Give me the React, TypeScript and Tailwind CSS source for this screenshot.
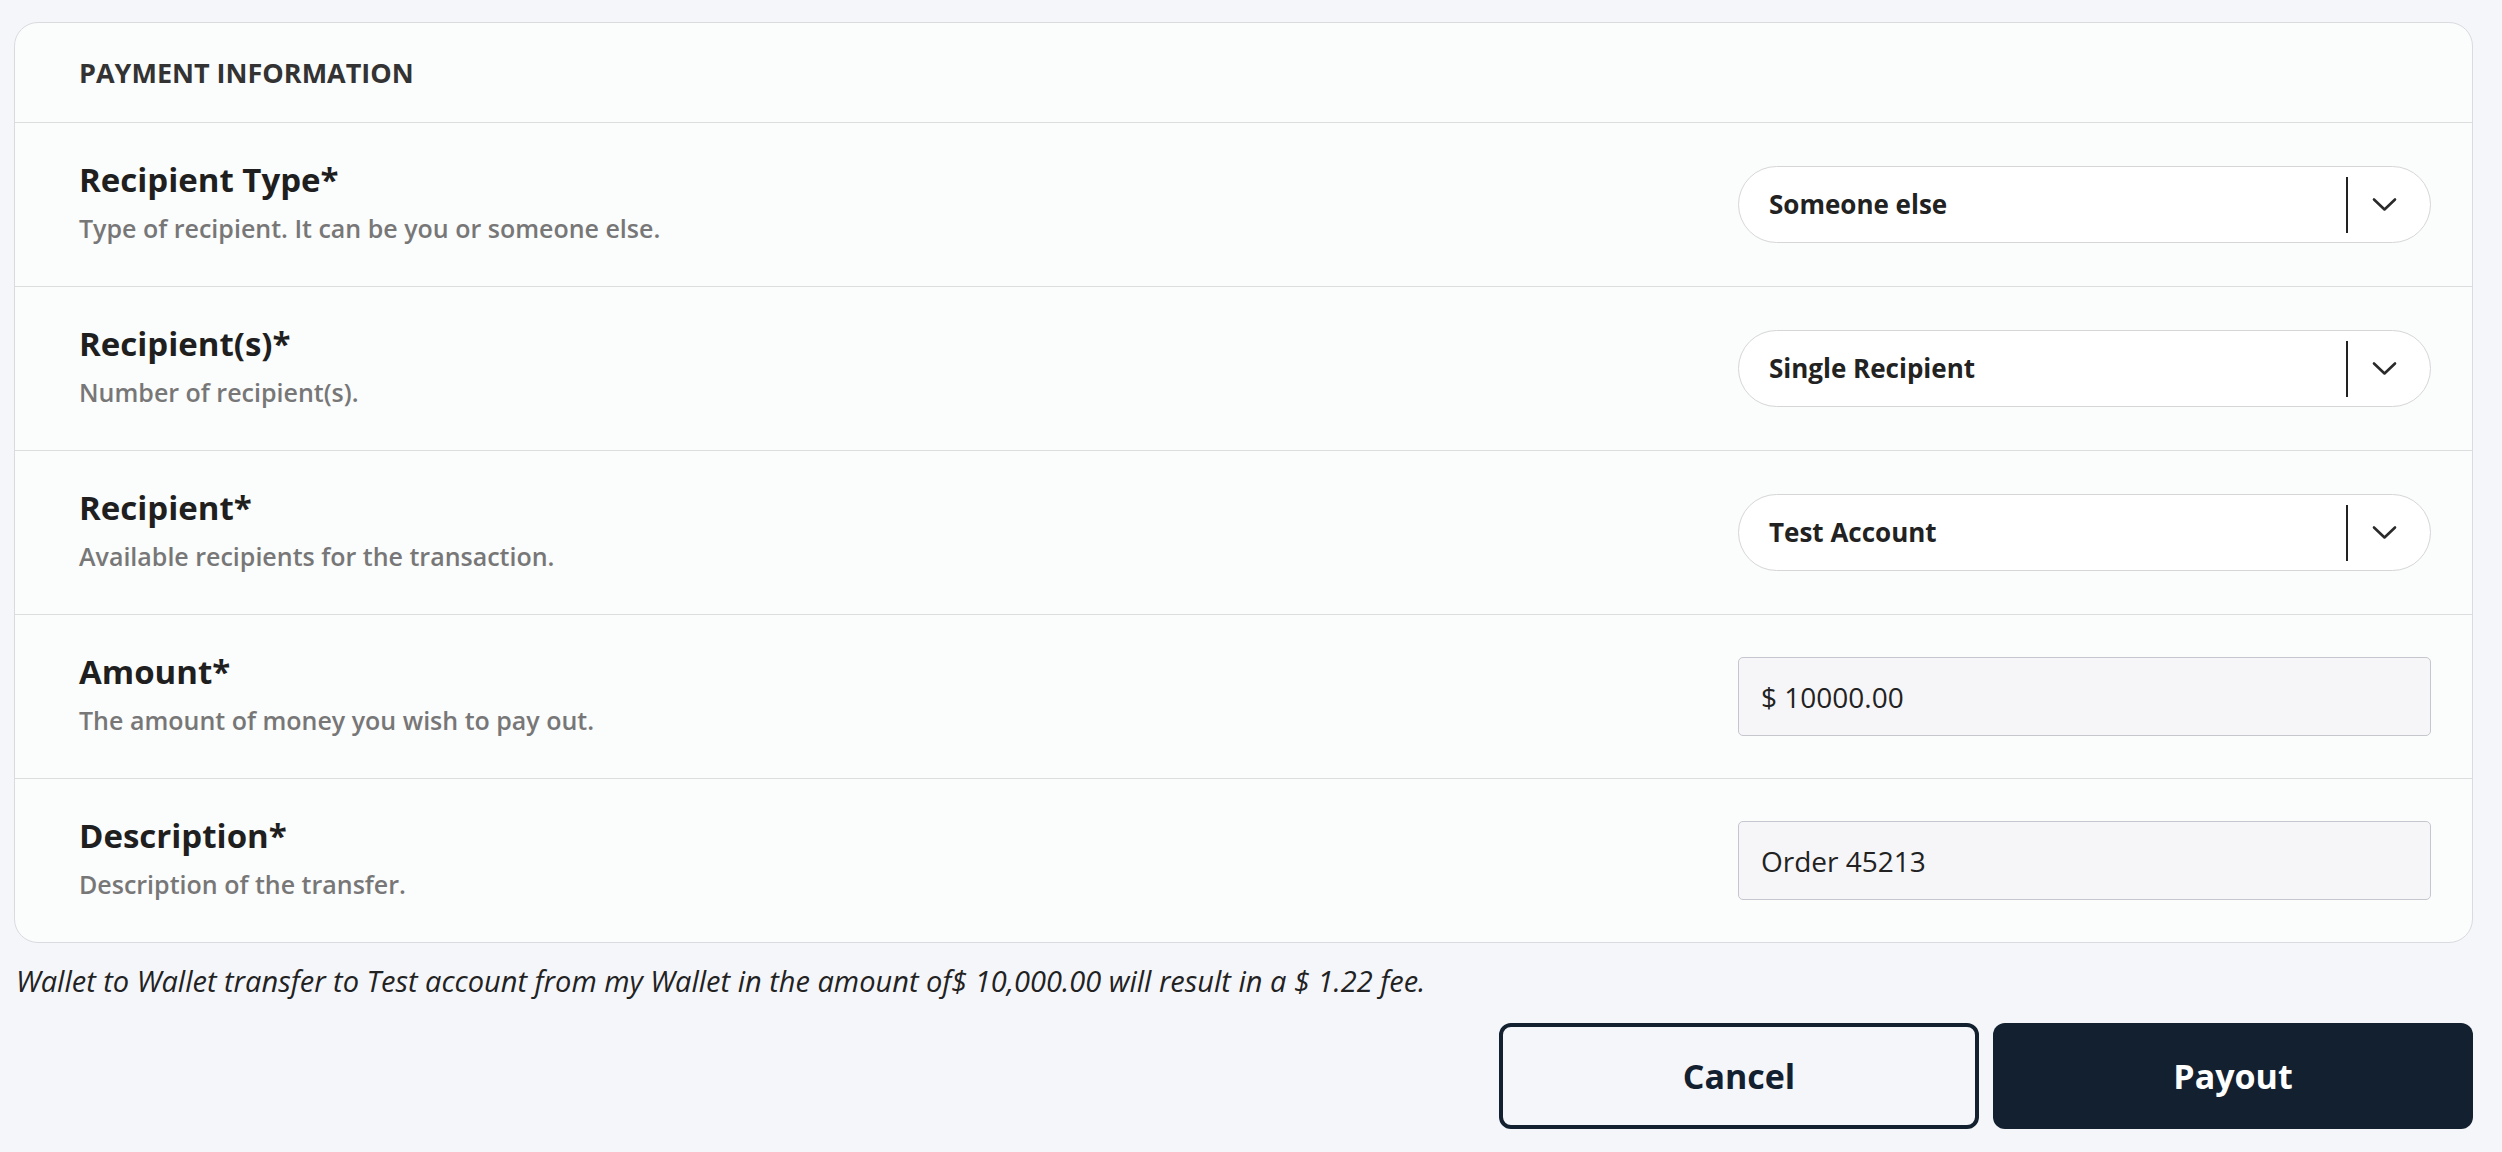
import React from "react";

type Field = {
    title: string;
    hint: string;
    kind: "select" | "input";
    value: string;
};

const fields: Field[] = [
    { title: "Recipient Type*", hint: "Type of recipient. It can be you or someone else.", kind: "select", value: "Someone else" },
    { title: "Recipient(s)*", hint: "Number of recipient(s).", kind: "select", value: "Single Recipient" },
    { title: "Recipient*", hint: "Available recipients for the transaction.", kind: "select", value: "Test Account" },
    { title: "Amount*", hint: "The amount of money you wish to pay out.", kind: "input", value: "$ 10000.00" },
    { title: "Description*", hint: "Description of the transfer.", kind: "input", value: "Order 45213" },
];

const Chevron = () => (
    <svg width="25" height="15" viewBox="0 0 25 15" fill="none" className="shrink-0">
        <path d="M2 2.5 L12.5 12.5 L23 2.5" stroke="#2a2a2a" strokeWidth="2.6" strokeLinecap="round" strokeLinejoin="round" />
    </svg>
);

const SelectBox = ({ value }: { value: string }) => (
    <div className="w-[693px] h-[77px] rounded-full border border-[#d6d6d8] bg-white flex items-center">
        <span className="flex-1 pl-[30px] text-[26px] font-bold text-[#222]">{value}</span>
        <div className="w-[2px] h-[56px] bg-[#222]" />
        <div className="ml-[24px] mr-[33px] flex items-center">
            <Chevron />
        </div>
    </div>
);

const InputBox = ({ value }: { value: string }) => (
    <div className="w-[693px] h-[79px] rounded-[5px] border border-[#c6c7ce] bg-[#f6f6f8] flex items-center pl-[22px] text-[28px] text-[#222]">
        {value}
    </div>
);

export default function App() {
    return (
        <div className="min-h-screen bg-[#f5f6fa] pt-[22px] font-['Open_Sans',_'Noto_Sans',_sans-serif]">
            {/* Payment card */}
            <div className="ml-[14px] w-[2459px] rounded-[24px] border border-[#d9dbdf] bg-[#fbfcfc] overflow-hidden">
                <div className="h-[99px] flex items-center px-[64px]">
                    <h2 className="text-[27px] leading-[32px] font-bold uppercase text-[#333]">Payment Information</h2>
                </div>
                {fields.map((f) => (
                    <div key={f.title} className="h-[164px] border-t border-[#dcdddf] flex items-center justify-between pl-[64px] pr-[41px]">
                        <div className="flex flex-col gap-[12px] -mt-[5px]">
                            <span className="text-[33px] leading-[40px] font-bold text-[#1f1f1f]">{f.title}</span>
                            <span className="text-[25px] leading-[32px] font-semibold text-[#777]">{f.hint}</span>
                        </div>
                        {f.kind === "select" ? <SelectBox value={f.value} /> : <InputBox value={f.value} />}
                    </div>
                ))}
            </div>

            <p className="mt-[20px] pl-[16px] text-[29px] leading-[36px] italic text-[#222]">
                Wallet to Wallet transfer to Test account from my Wallet in the amount of$ 10,000.00 will result in a $ 1.22 fee.
            </p>

            <div className="mt-[24px] pr-[29px] flex justify-end gap-[14px]">
                <button className="w-[480px] h-[106px] rounded-[12px] border-[4px] border-[#13202f] bg-transparent text-[34px] font-bold text-[#13202f]">
                    Cancel
                </button>
                <button className="w-[480px] h-[106px] rounded-[12px] bg-[#13202f] text-[34px] font-bold text-white">
                    Payout
                </button>
            </div>
        </div>
    );
}
